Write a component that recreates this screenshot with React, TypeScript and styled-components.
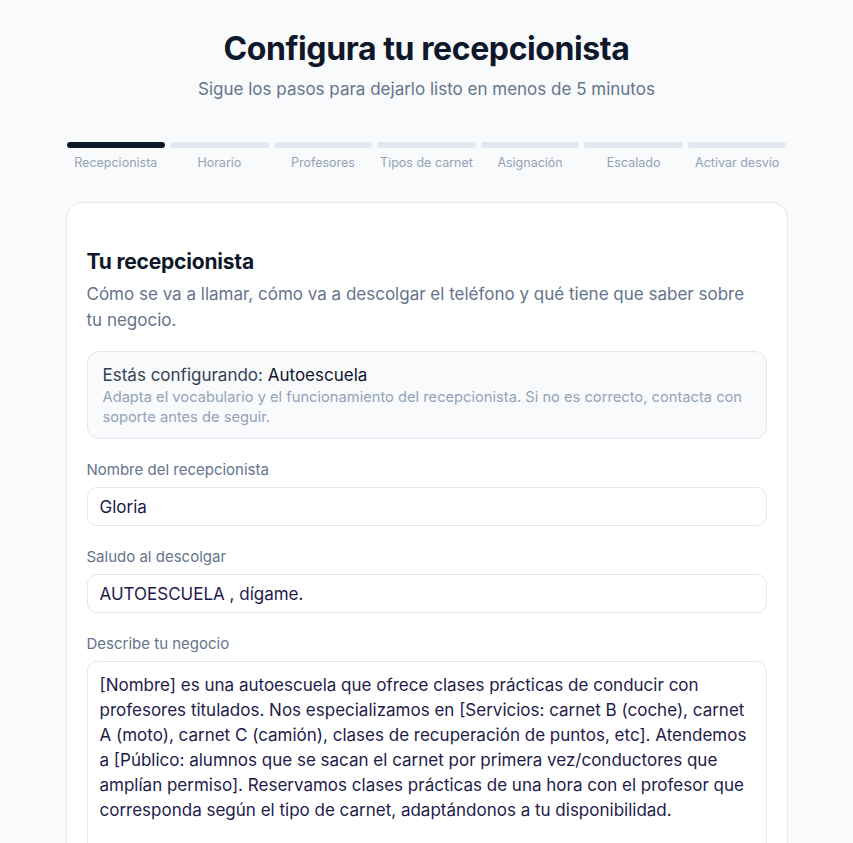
import React from "react";
import styled, { createGlobalStyle } from "styled-components";

const GlobalStyle = createGlobalStyle`
  * { box-sizing: border-box; }
  html, body { margin: 0; padding: 0; }
  body {
    background: #f8fafc;
    font-family: Inter, "Noto Sans", "Liberation Sans", sans-serif;
    color: #0f172a;
  }
`;

const Page = styled.main`
  width: 720px;
  margin: 0 auto;
  padding-top: 30px;
  display: flex;
  flex-direction: column;
`;

const Header = styled.header`
  display: flex;
  flex-direction: column;
  align-items: center;
`;

const Title = styled.h1`
  margin: 0;
  font-size: 32px;
  line-height: 38px;
  font-weight: 700;
  letter-spacing: -0.4px;
  color: #0f172a;
`;

const Subtitle = styled.p`
  margin: 9px 0 0;
  font-size: 17px;
  line-height: 24px;
  color: #64748b;
`;

const Steps = styled.ol`
  list-style: none;
  margin: 41px 0 0;
  padding: 0;
  display: grid;
  grid-template-columns: repeat(7, 1fr);
  gap: 5px;
`;

const Step = styled.li`
  display: flex;
  flex-direction: column;
  align-items: center;
  gap: 7px;
`;

const Bar = styled.div<{ $active?: boolean }>`
  width: 100%;
  height: 6px;
  border-radius: 3px;
  background: ${(p) => (p.$active ? "#0f172a" : "#e2e8f0")};
`;

const StepLabel = styled.span`
  font-size: 12.5px;
  line-height: 16px;
  color: #94a3b8;
  white-space: nowrap;
`;

const Card = styled.section`
  margin: 31px -1px 0;
  background: #ffffff;
  border: 1px solid #e2e8f0;
  border-radius: 16px;
  padding: 45px 20px 40px;
  display: flex;
  flex-direction: column;
`;

const CardTitle = styled.h2`
  margin: 0;
  font-size: 21px;
  line-height: 28px;
  font-weight: 700;
  letter-spacing: -0.2px;
  color: #0f172a;
`;

const CardDesc = styled.p`
  margin: 5px 0 0;
  max-width: 668px;
  font-size: 17px;
  line-height: 26px;
  color: #64748b;
`;

const InfoBox = styled.div`
  margin-top: 18px;
  background: #f8fafc;
  border: 1px solid #e2e8f0;
  border-radius: 12px;
  padding: 11px 15px;
`;

const InfoTitle = styled.div`
  font-size: 17px;
  line-height: 24px;
  color: #334155;
`;

const Strong = styled.span`
  color: #0f172a;
  font-weight: 400;
`;

const InfoText = styled.div`
  font-size: 14.7px;
  line-height: 20px;
  color: #94a3b8;
`;

const Field = styled.div`
  margin-top: 22px;
  display: flex;
  flex-direction: column;
  gap: 8px;
`;

const Label = styled.label`
  font-size: 15px;
  line-height: 18px;
  color: #64748b;
`;

const Input = styled.input`
  height: 39px;
  width: 100%;
  border: 1px solid #e2e8f0;
  border-radius: 10px;
  padding: 0 12px;
  font-family: inherit;
  font-size: 17px;
  color: #1e1b4b;
  background: #ffffff;
  outline: none;
`;

const TextArea = styled.textarea`
  width: 100%;
  min-height: 220px;
  border: 1px solid #e2e8f0;
  border-radius: 10px;
  padding: 11px 12px;
  font-family: inherit;
  font-size: 17px;
  line-height: 25px;
  color: #1e1b4b;
  background: #ffffff;
  resize: none;
  outline: none;
`;

const steps = [
  "Recepcionista",
  "Horario",
  "Profesores",
  "Tipos de carnet",
  "Asignación",
  "Escalado",
  "Activar desvío",
];

const description =
  "[Nombre] es una autoescuela que ofrece clases prácticas de conducir con profesores titulados. Nos especializamos en [Servicios: carnet B (coche), carnet A (moto), carnet C (camión), clases de recuperación de puntos, etc]. Atendemos a [Público: alumnos que se sacan el carnet por primera vez/conductores que amplían permiso]. Reservamos clases prácticas de una hora con el profesor que corresponda según el tipo de carnet, adaptándonos a tu disponibilidad.";

export default function App() {
  return (
    <>
      <GlobalStyle />
      <Page>
        <Header>
          <Title>Configura tu recepcionista</Title>
          <Subtitle>Sigue los pasos para dejarlo listo en menos de 5 minutos</Subtitle>
        </Header>
        <Steps>
          {steps.map((s, i) => (
            <Step key={s}>
              <Bar $active={i === 0} />
              <StepLabel>{s}</StepLabel>
            </Step>
          ))}
        </Steps>
        <Card>
          <CardTitle>Tu recepcionista</CardTitle>
          <CardDesc>
            Cómo se va a llamar, cómo va a descolgar el teléfono y qué tiene que saber sobre tu negocio.
          </CardDesc>
          <InfoBox>
            <InfoTitle>
              Estás configurando: <Strong>Autoescuela</Strong>
            </InfoTitle>
            <InfoText>
              Adapta el vocabulario y el funcionamiento del recepcionista. Si no es correcto, contacta con soporte antes de seguir.
            </InfoText>
          </InfoBox>
          <Field>
            <Label htmlFor="name">Nombre del recepcionista</Label>
            <Input id="name" defaultValue="Gloria" />
          </Field>
          <Field>
            <Label htmlFor="greeting">Saludo al descolgar</Label>
            <Input id="greeting" defaultValue="AUTOESCUELA , dígame." />
          </Field>
          <Field>
            <Label htmlFor="business">Describe tu negocio</Label>
            <TextArea id="business" defaultValue={description} />
          </Field>
        </Card>
      </Page>
    </>
  );
}
